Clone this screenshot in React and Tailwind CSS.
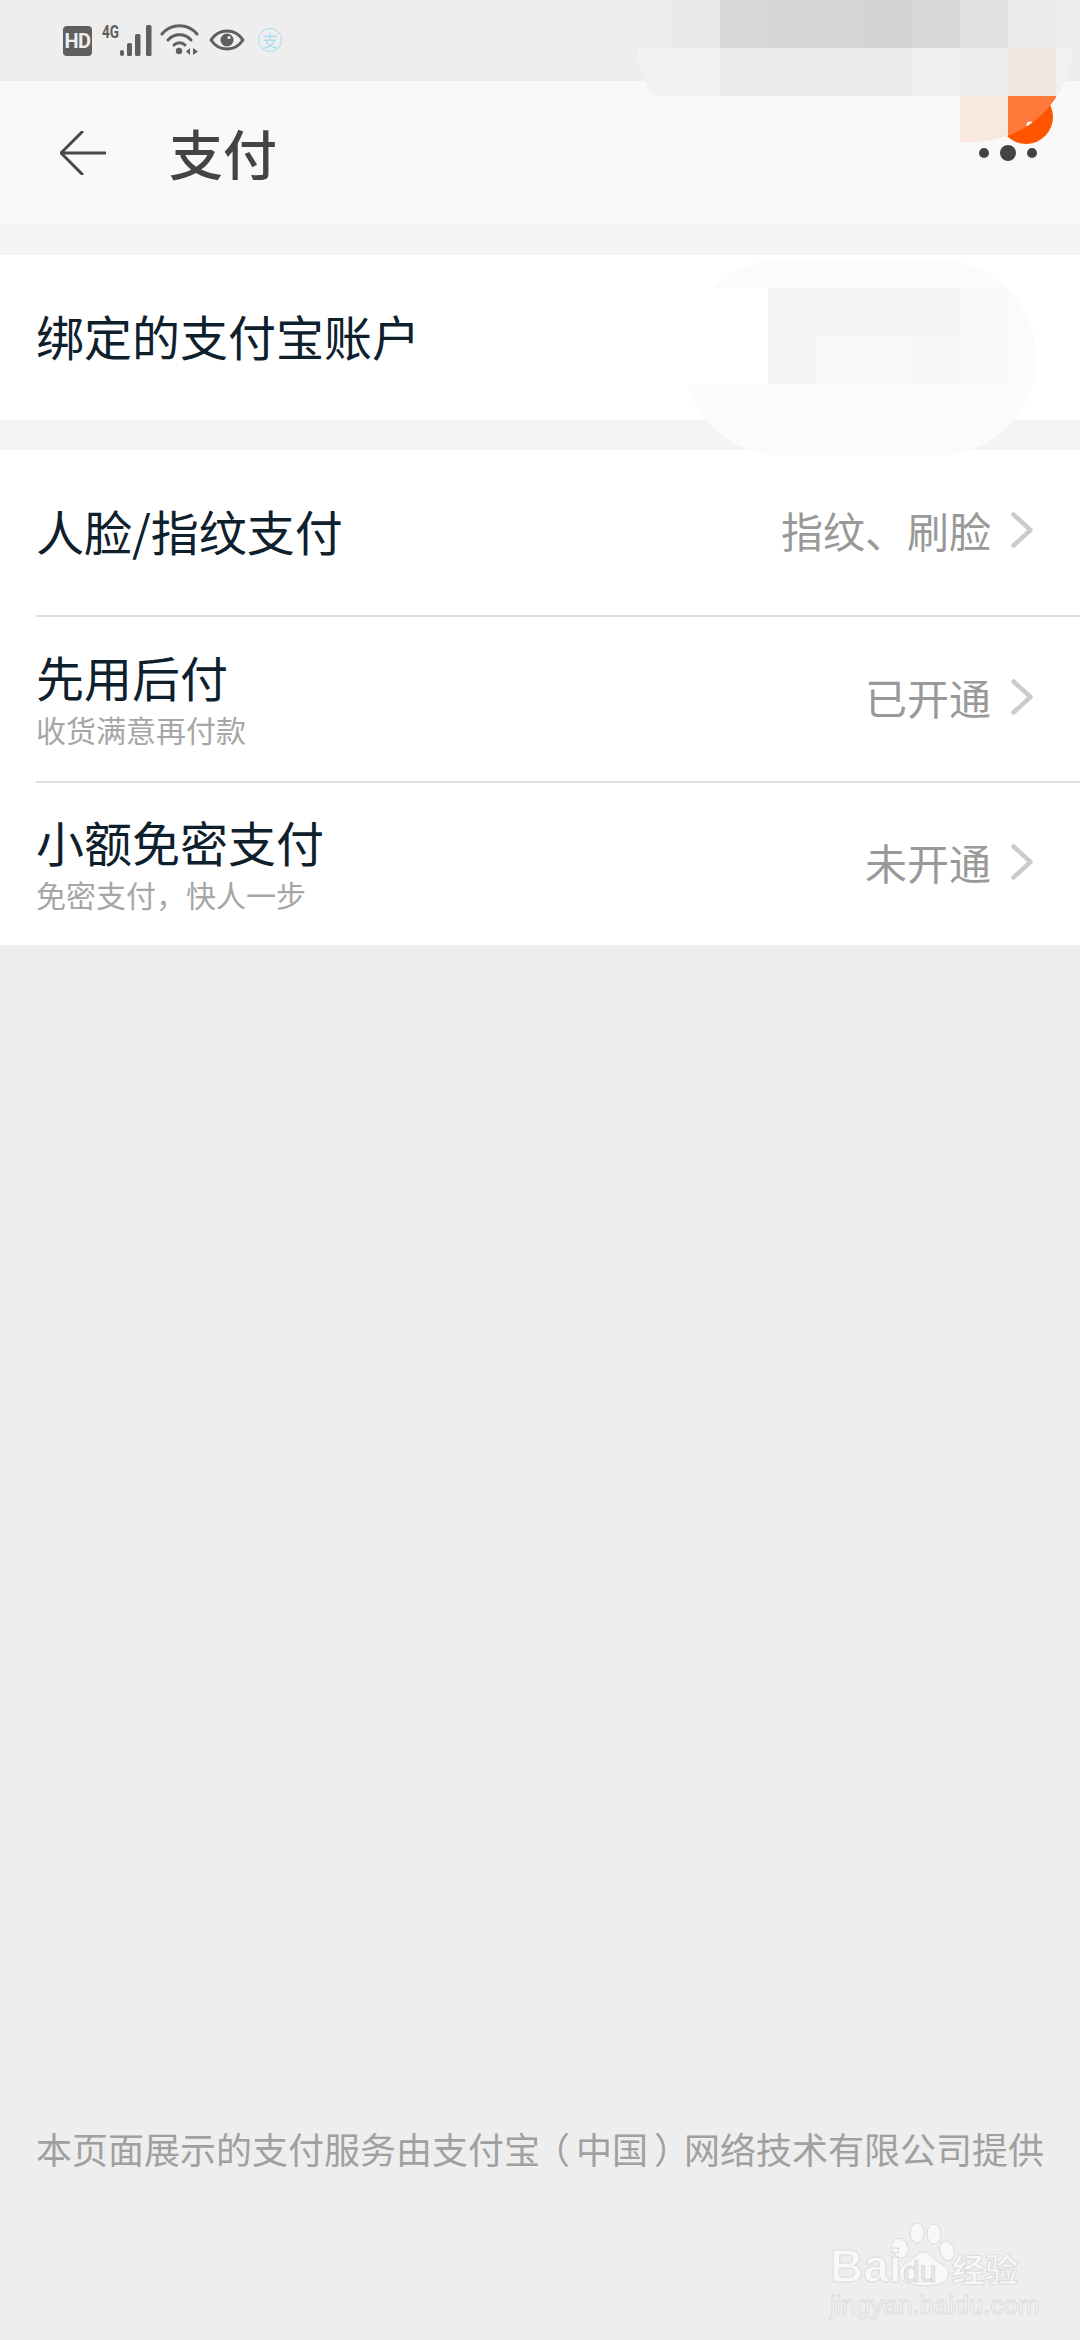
const CJK = "font-['Noto_Sans_CJK_SC','Noto_Sans',sans-serif]";

function BackArrow() {
  return (
    <svg width="46" height="44" viewBox="0 0 46 44" fill="none" stroke="#484848" strokeWidth="3" strokeLinecap="round" strokeLinejoin="round">
      <path d="M1 22 H45" />
      <path d="M22 1 L1 22 L22 43" />
    </svg>
  );
}

function Chevron() {
  return (
    <svg width="22" height="36" viewBox="0 0 22 36" fill="none" stroke="#cccccc" strokeWidth="4.5" strokeLinecap="round" strokeLinejoin="round">
      <path d="M2.5 2.5 L19.5 18 L2.5 33.5" />
    </svg>
  );
}

function StatusBar() {
  return (
    <div className="flex h-[81px] items-start bg-[#eeeeee] pl-[63px] pt-[24px]">
      <div className="mt-[2px] flex h-[30px] w-[29px] items-center justify-center rounded-[4px] bg-[#5f5f5f] font-['Roboto',sans-serif] text-[20px] font-bold leading-none tracking-[-0.5px] text-[#eeeeee]">
        HD
      </div>
      <svg className="ml-[9px]" width="52" height="32" viewBox="0 0 52 32" fill="#5f5f5f">
        <text x="1" y="14" fontFamily="Roboto, sans-serif" fontSize="18" fontWeight="700" textLength="17" lengthAdjust="spacingAndGlyphs">4G</text>
        <rect x="19" y="26" width="4" height="6" rx="2" />
        <rect x="26" y="19" width="5" height="13" rx="1.5" />
        <rect x="34" y="10" width="5.5" height="22" rx="1.5" />
        <rect x="45" y="1" width="5.5" height="31" rx="1.5" />
      </svg>
      <svg className="ml-[7px]" width="40" height="32" viewBox="0 0 40 32" fill="none" stroke="#5f5f5f" strokeWidth="3" strokeLinecap="round">
        <path d="M2 10 C11 -1 28 -1 37 10" />
        <path d="M8 16 C14 9 25 9 31 16" />
        <path d="M14 21 C17 18 22 18 25 21" />
        <circle cx="19" cy="27" r="3.2" fill="#5f5f5f" stroke="none" />
        <path d="M30 24 L26 27.5 L30 31 Z M33 24 L38 27.5 L33 31 Z" fill="#5f5f5f" stroke="none" />
      </svg>
      <svg className="ml-[9px] mt-[2px]" width="36" height="28" viewBox="0 0 36 28" fill="none">
        <path d="M2 14 C10 2 26 2 34 14 C26 26 10 26 2 14 Z" stroke="#5f5f5f" strokeWidth="3" strokeLinejoin="round" />
        <circle cx="18" cy="14" r="6.5" fill="#5f5f5f" />
        <circle cx="20" cy="11.5" r="1.6" fill="#eeeeee" />
      </svg>
      <div className={`ml-[13px] mt-[4px] flex h-[24px] w-[24px] items-center justify-center rounded-full border border-[#a8dcf5] text-[16px] leading-none text-[#a8dcf5] ${CJK}`}>
        支
      </div>
    </div>
  );
}

function Header() {
  return (
    <div className="flex h-[144px] items-center bg-[#f9f9f9] pl-[60px] pr-[43px]">
      <BackArrow />
      <span className={`ml-[63px] text-[54px] font-medium leading-none text-[#444444] ${CJK}`}>支付</span>
      <div className="ml-auto flex items-center gap-[11px]">
        <span className="h-[10px] w-[10px] rounded-full bg-[#444444]" />
        <span className="h-[16px] w-[16px] rounded-full bg-[#444444]" />
        <span className="h-[10px] w-[10px] rounded-full bg-[#444444]" />
      </div>
    </div>
  );
}

function Row({ title, sub, value, className }) {
  return (
    <div className={`flex items-center pb-[5px] pl-[36px] pr-[47px] ${className}`}>
      <div className="flex flex-col">
        <span className={`text-[48px] leading-[60px] text-[#0f202d] ${sub ? "mb-[5px]" : ""}`}>{title}</span>
        {sub && <span className="text-[30px] leading-[36px] text-[#a6a6a6]">{sub}</span>}
      </div>
      {value && (
        <div className="ml-auto flex items-center gap-[20px]">
          <span className="text-[42px] leading-none text-[#999999]">{value}</span>
          <Chevron />
        </div>
      )}
    </div>
  );
}

function Divider() {
  return <div className="ml-[36px] h-[2px] bg-[#dddddd]" />;
}

// pixelated smudges over the notification area and the account name
function TopMosaic() {
  const rowOne = [
    [672, 48, "#e9e9e9"], [720, 48, "#d8d8d8"], [768, 96, "#d6d6d6"], [864, 48, "#d3d3d3"],
    [912, 48, "#d7d7d7"], [960, 48, "#e1e1e1"], [1008, 48, "#eaeaea"],
  ];
  const rowTwo = [
    [637, 35, "#f2f2f2"], [672, 48, "#f1f1f1"], [720, 96, "#ebebeb"], [816, 96, "#ebebeb"],
    [912, 48, "#efefef"], [960, 48, "#ededed"], [1008, 48, "#efe6e1"], [1056, 24, "#f1f1f1"],
  ];
  return (
    <svg className="absolute left-0 top-0" width="1080" height="150" viewBox="0 0 1080 150">
      <defs>
        <clipPath id="topPill">
          <rect x="637" y="-58" width="436" height="200" rx="100" />
        </clipPath>
      </defs>
      <circle cx="1026" cy="117" r="27" fill="#ff5500" />
      {rowOne.map(([x, w, c]) => (
        <rect key={x} x={x} y="0" width={w} height="48" fill={c} />
      ))}
      <g clipPath="url(#topPill)">
        {rowTwo.map(([x, w, c]) => (
          <rect key={x} x={x} y="48" width={w} height="48" fill={c} />
        ))}
        <rect x="960" y="96" width="48" height="46" fill="#f8e8df" />
        <rect x="1008" y="96" width="48" height="46" fill="#fe7a3a" />
        <circle cx="1030" cy="125" r="3.5" fill="#ffffff" />
      </g>
    </svg>
  );
}

function AccountMosaic() {
  const blocks = [
    [768, 288, 48, "#f5f5f5"], [816, 288, 96, "#f5f5f5"], [912, 288, 48, "#f3f3f3"], [960, 288, 48, "#f9f9f9"],
    [768, 336, 48, "#f5f5f5"], [816, 336, 96, "#f9f9f9"], [912, 336, 48, "#f6f6f6"], [960, 336, 48, "#f9f9f9"],
  ];
  return (
    <svg className="absolute left-0 top-[250px]" width="1080" height="210" viewBox="0 250 1080 210">
      <defs>
        <clipPath id="accountPill">
          <rect x="684" y="260" width="352" height="195" rx="97" />
        </clipPath>
      </defs>
      <g clipPath="url(#accountPill)">
        <rect x="684" y="260" width="352" height="195" fill="#fbfbfb" />
        <rect x="684" y="288" width="84" height="96" fill="#ffffff" />
        {blocks.map(([x, y, w, c]) => (
          <rect key={`${x}-${y}`} x={x} y={y} width={w} height="48" fill={c} />
        ))}
      </g>
    </svg>
  );
}

function Watermark() {
  return (
    <div className="absolute left-[830px] top-[2222px] h-[100px] w-[200px] text-[#f8f8f8]">
      <svg className="absolute left-[62px] top-0" width="70" height="66" viewBox="0 0 70 66" fill="#f8f8f8" stroke="#dcdcdc" strokeWidth="1">
        <ellipse cx="8" cy="26" rx="8" ry="10" transform="rotate(-20 8 26)" />
        <ellipse cx="25" cy="11" rx="7" ry="10" />
        <ellipse cx="42" cy="12" rx="7" ry="10" />
        <ellipse cx="55" cy="29" rx="7" ry="10" transform="rotate(-15 55 29)" />
        <path d="M14 60 C4 56 6 44 16 40 C24 36 24 30 31 30 C39 30 40 37 48 41 C58 46 60 56 50 61 C42 65 24 65 14 60 Z" />
      </svg>
      <span className="absolute left-0 top-[19px] font-['Liberation_Sans',sans-serif] text-[46px] font-bold leading-[50px] [-webkit-text-stroke:1px_#dcdcdc]">Bai</span>
      <span className="absolute left-[73px] top-[33px] font-['Liberation_Sans',sans-serif] text-[30px] leading-[34px] text-[#eeeeee] [-webkit-text-stroke:1px_#d8d8d8]">du</span>
      <span className={`absolute left-[122px] top-[24px] text-[33px] font-bold leading-[44px] [-webkit-text-stroke:1px_#dcdcdc] ${CJK}`}>经验</span>
      <span className="absolute left-0 top-[68px] font-['Liberation_Sans',sans-serif] text-[26px] leading-[30px] [-webkit-text-stroke:1px_#dcdcdc]">jingyan.baidu.com</span>
    </div>
  );
}

export default function App() {
  return (
    <div className={`relative flex h-[2340px] w-[1080px] flex-col overflow-hidden bg-[#eeeeee] ${CJK}`}>
      <StatusBar />
      <Header />
      <div className="h-[30px] bg-[#f4f4f4]" />
      <Row title="绑定的支付宝账户" className="h-[165px] bg-white" />
      <div className="h-[30px] bg-[#f4f4f4]" />
      <div className="bg-white">
        <Row title="人脸/指纹支付" value="指纹、刷脸" className="h-[165px]" />
        <Divider />
        <Row title="先用后付" sub="收货满意再付款" value="已开通" className="h-[164px]" />
        <Divider />
        <Row title="小额免密支付" sub="免密支付，快人一步" value="未开通" className="h-[162px]" />
      </div>
      <p className="mt-auto mb-[170px] whitespace-nowrap pl-[36px] text-[36px] leading-[44px] text-[#a0a0a0]">
        本页面展示的支付服务由支付宝<span className="ml-[-6px] mr-[6px]">（</span>中国<span className="ml-[6px] mr-[-6px]">）</span>网络技术有限公司提供
      </p>
      <TopMosaic />
      <AccountMosaic />
      <Watermark />
    </div>
  );
}
